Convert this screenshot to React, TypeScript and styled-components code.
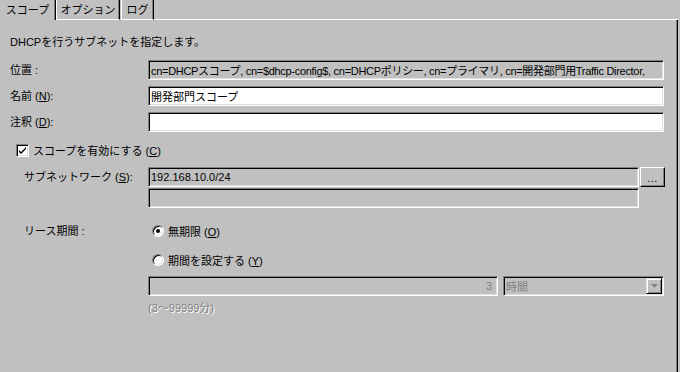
import styled, { createGlobalStyle } from "styled-components";

const GlobalStyle = createGlobalStyle`
  html, body {
    margin: 0;
    padding: 0;
    background: #c0c0c0;
  }
  body {
    font-family: "Liberation Sans", "Noto Sans CJK JP", sans-serif;
    font-size: 11px;
    color: #000;
  }
`;

const Window = styled.div`
  width: 680px;
  height: 372px;
  overflow: hidden;
  background: #c0c0c0;
  display: flex;
  flex-direction: column;
`;

const TabStrip = styled.div`
  display: flex;
  height: 20px;
  width: 678px;
`;

const Tab = styled.div<{ $selected?: boolean; $width: number }>`
  box-sizing: border-box;
  width: ${p => p.$width}px;
  height: 20px;
  display: flex;
  align-items: center;
  justify-content: center;
  padding-bottom: 2px;
  border-right: 1px solid #000;
  border-left: ${p => (p.$selected ? "none" : "1px solid #fff")};
  border-bottom: ${p => (p.$selected ? "none" : "1px solid #fff")};
  box-shadow: inset -1px 0 #808080;
  margin-right: ${p => (p.$selected ? 0 : 1)}px;
`;

const TabFiller = styled.div`
  flex: 1;
  border-bottom: 1px solid #fff;
`;

const Panel = styled.div`
  box-sizing: border-box;
  width: 678px;
  flex: 1;
  border-right: 1px solid #000;
  box-shadow: inset -1px 0 #808080;
  padding: 15px 0 0 10px;
  display: flex;
  flex-direction: column;
`;

const Description = styled.div`
  height: 14px;
  line-height: 14px;
`;

const Row = styled.div<{ $top: number; $alignTop?: boolean }>`
  display: flex;
  align-items: ${p => (p.$alignTop ? "flex-start" : "center")};
  margin-top: ${p => p.$top}px;
`;

const Label = styled.div<{ $indent?: boolean }>`
  box-sizing: border-box;
  width: 138px;
  flex-shrink: 0;
  padding-left: ${p => (p.$indent ? 14 : 0)}px;
  line-height: 20px;
  white-space: nowrap;
`;

const Field = styled.div<{ $width: number; $disabled?: boolean; $right?: boolean; $tight?: boolean }>`
  box-sizing: border-box;
  width: ${p => p.$width}px;
  height: 20px;
  flex-shrink: 0;
  border: 1px solid;
  border-color: #808080 #fff #fff #808080;
  box-shadow: inset 1px 1px #000, inset -1px -1px #dfdfdf;
  background: ${p => (p.$disabled ? "#c0c0c0" : "#fff")};
  color: ${p => (p.$right ? "#808080" : "#000")};
  padding: 0 ${p => (p.$right ? 5 : 2)}px 0 2px;
  letter-spacing: ${p => (p.$tight ? "-0.3px" : "normal")};
  display: flex;
  align-items: center;
  justify-content: ${p => (p.$right ? "flex-end" : "flex-start")};
  white-space: nowrap;
  overflow: hidden;
`;

const Stack = styled.div`
  display: flex;
  flex-direction: column;
  gap: 1px;
`;

const BrowseButton = styled.div`
  box-sizing: border-box;
  width: 25px;
  height: 20px;
  margin-left: 1px;
  border: 1px solid;
  border-color: #fff #000 #000 #fff;
  box-shadow: inset -1px -1px #808080;
  display: flex;
  align-items: center;
  justify-content: center;
  padding-top: 2px;
  letter-spacing: 0.5px;
`;

const CheckRow = styled.label`
  display: flex;
  align-items: center;
  gap: 4px;
  margin-top: 11px;
  padding-left: 6px;
  height: 14px;
`;

const CheckBox = styled.span`
  box-sizing: border-box;
  width: 13px;
  height: 13px;
  border: 1px solid;
  border-color: #808080 #fff #fff #808080;
  box-shadow: inset 1px 1px #000, inset -1px -1px #dfdfdf;
  background: #fff;
  display: flex;
  align-items: center;
  justify-content: center;
`;

const LeaseSection = styled.div`
  display: flex;
  margin-top: 14px;
`;

const LeaseLabel = styled(Label)`
  height: 18px;
  line-height: 18px;
`;

const Options = styled.div`
  display: flex;
  flex-direction: column;
`;

const RadioRow = styled.div<{ $top: number }>`
  display: flex;
  align-items: center;
  gap: 4px;
  height: 18px;
  margin-top: ${p => p.$top}px;
  padding-left: 4px;
`;

const Radio = styled.span<{ $checked?: boolean }>`
  box-sizing: border-box;
  width: 12px;
  height: 12px;
  border-radius: 50%;
  border: 1px solid;
  border-color: #808080 #fff #fff #808080;
  box-shadow: inset 1px 1px #000, inset -1px -1px #dfdfdf;
  background: #fff;
  display: flex;
  align-items: center;
  justify-content: center;

  &::after {
    content: "";
    display: ${p => (p.$checked ? "block" : "none")};
    width: 4px;
    height: 4px;
    border-radius: 50%;
    background: #000;
  }
`;

const DurationRow = styled.div`
  display: flex;
  gap: 5px;
  margin-top: 7px;
`;

const Combo = styled(Field)`
  padding-right: 1px;
  color: #808080;
  justify-content: space-between;
`;

const ComboButton = styled.span`
  box-sizing: border-box;
  width: 16px;
  height: 16px;
  border: 1px solid;
  border-color: #dfdfdf #000 #000 #dfdfdf;
  box-shadow: inset 1px 1px #fff, inset -1px -1px #808080;
  display: flex;
  align-items: center;
  justify-content: center;
`;

const Hint = styled.div`
  margin-top: 5px;
  color: #808080;
  text-shadow: 1px 1px #fff;
  height: 14px;
  line-height: 14px;
`;

function App() {
  return (
    <Window>
      <GlobalStyle />
      <TabStrip>
        <Tab $selected $width={56}>スコープ</Tab>
        <Tab $width={64}>オプション</Tab>
        <Tab $width={33}>ログ</Tab>
        <TabFiller />
      </TabStrip>
      <Panel>
        <Description>DHCPを行うサブネットを指定します。</Description>
        <Row $top={11}>
          <Label>位置 :</Label>
          <Field $width={516} $disabled $tight>
            cn=DHCPスコープ, cn=$dhcp-config$, cn=DHCPポリシー, cn=プライマリ, cn=開発部門用Traffic Director,
          </Field>
        </Row>
        <Row $top={6}>
          <Label>名前 (<u>N</u>):</Label>
          <Field $width={516}>開発部門スコープ</Field>
        </Row>
        <Row $top={6}>
          <Label>注釈 (<u>D</u>):</Label>
          <Field $width={516} />
        </Row>
        <CheckRow>
          <CheckBox>
            <svg width="9" height="9" viewBox="0 0 9 9">
              <path d="M1 4 L3 6 L8 1 L8 3 L3 8 L1 6 Z" fill="#000" />
            </svg>
          </CheckBox>
          <span>スコープを有効にする (<u>C</u>)</span>
        </CheckRow>
        <Row $top={10} $alignTop>
          <Label $indent>サブネットワーク (<u>S</u>):</Label>
          <Stack>
            <Field $width={491} $disabled>192.168.10.0/24</Field>
            <Field $width={491} $disabled />
          </Stack>
          <BrowseButton>...</BrowseButton>
        </Row>
        <LeaseSection>
          <LeaseLabel $indent>リース期間 :</LeaseLabel>
          <Options>
            <RadioRow $top={0}>
              <Radio $checked />
              <span>無期限 (<u>O</u>)</span>
            </RadioRow>
            <RadioRow $top={11}>
              <Radio />
              <span>期間を設定する (<u>Y</u>)</span>
            </RadioRow>
            <DurationRow>
              <Field $width={350} $disabled $right>3</Field>
              <Combo $width={161} $disabled>
                <span>時間</span>
                <ComboButton>
                  <svg width="7" height="5" viewBox="0 0 7 5">
                    <path d="M1 1 L6 1 L3.5 4 Z" fill="#fff" />
                    <path d="M0 0 L7 0 L3.5 4 Z" fill="#808080" />
                  </svg>
                </ComboButton>
              </Combo>
            </DurationRow>
            <Hint>(3〜99999分)</Hint>
          </Options>
        </LeaseSection>
      </Panel>
    </Window>
  );
}

export default App;
